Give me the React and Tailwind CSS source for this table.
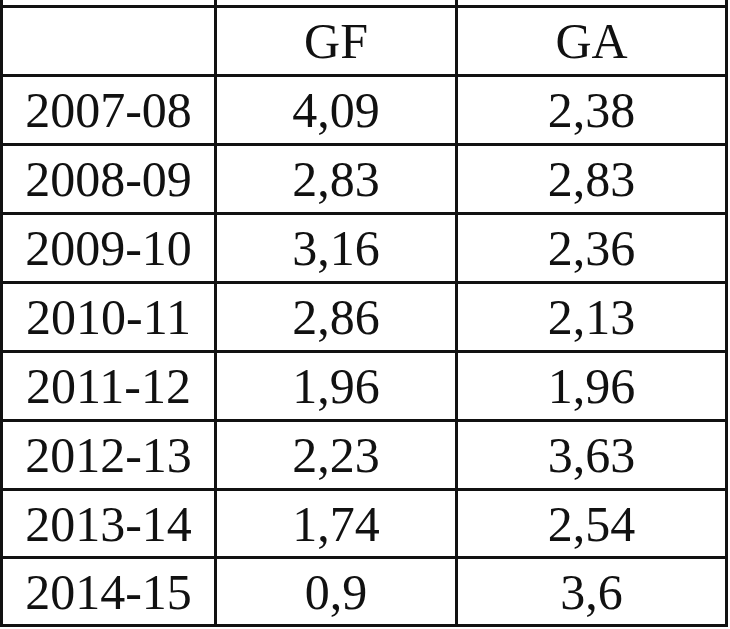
export default function App() {
  const rows = [
    ["2007-08", "4,09", "2,38"],
    ["2008-09", "2,83", "2,83"],
    ["2009-10", "3,16", "2,36"],
    ["2010-11", "2,86", "2,13"],
    ["2011-12", "1,96", "1,96"],
    ["2012-13", "2,23", "3,63"],
    ["2013-14", "1,74", "2,54"],
    ["2014-15", "0,9", "3,6"],
  ];
  const cell =
    "bg-white flex items-center justify-center text-[50px] leading-none text-[#111]";
  return (
    <div className="w-[730px] h-[629px] bg-white">
      <div
        className="w-[728px] bg-[#111] grid grid-cols-[211px_238px_267px] grid-rows-[5px_66px_66px_66px_66px_66px_66px_66px_65px_65px] gap-[3px] px-[3px] pb-[3px]"
        style={{ fontFamily: '"Liberation Serif", "Times New Roman", serif' }}
      >
        <div className="bg-white" />
        <div className="bg-white" />
        <div className="bg-white" />
        <div className={cell}></div>
        <div className={cell}>GF</div>
        <div className={cell}>GA</div>
        {rows.map((r) =>
          r.map((v, i) => (
            <div key={r[0] + i} className={cell}>
              {v}
            </div>
          ))
        )}
      </div>
    </div>
  );
}
